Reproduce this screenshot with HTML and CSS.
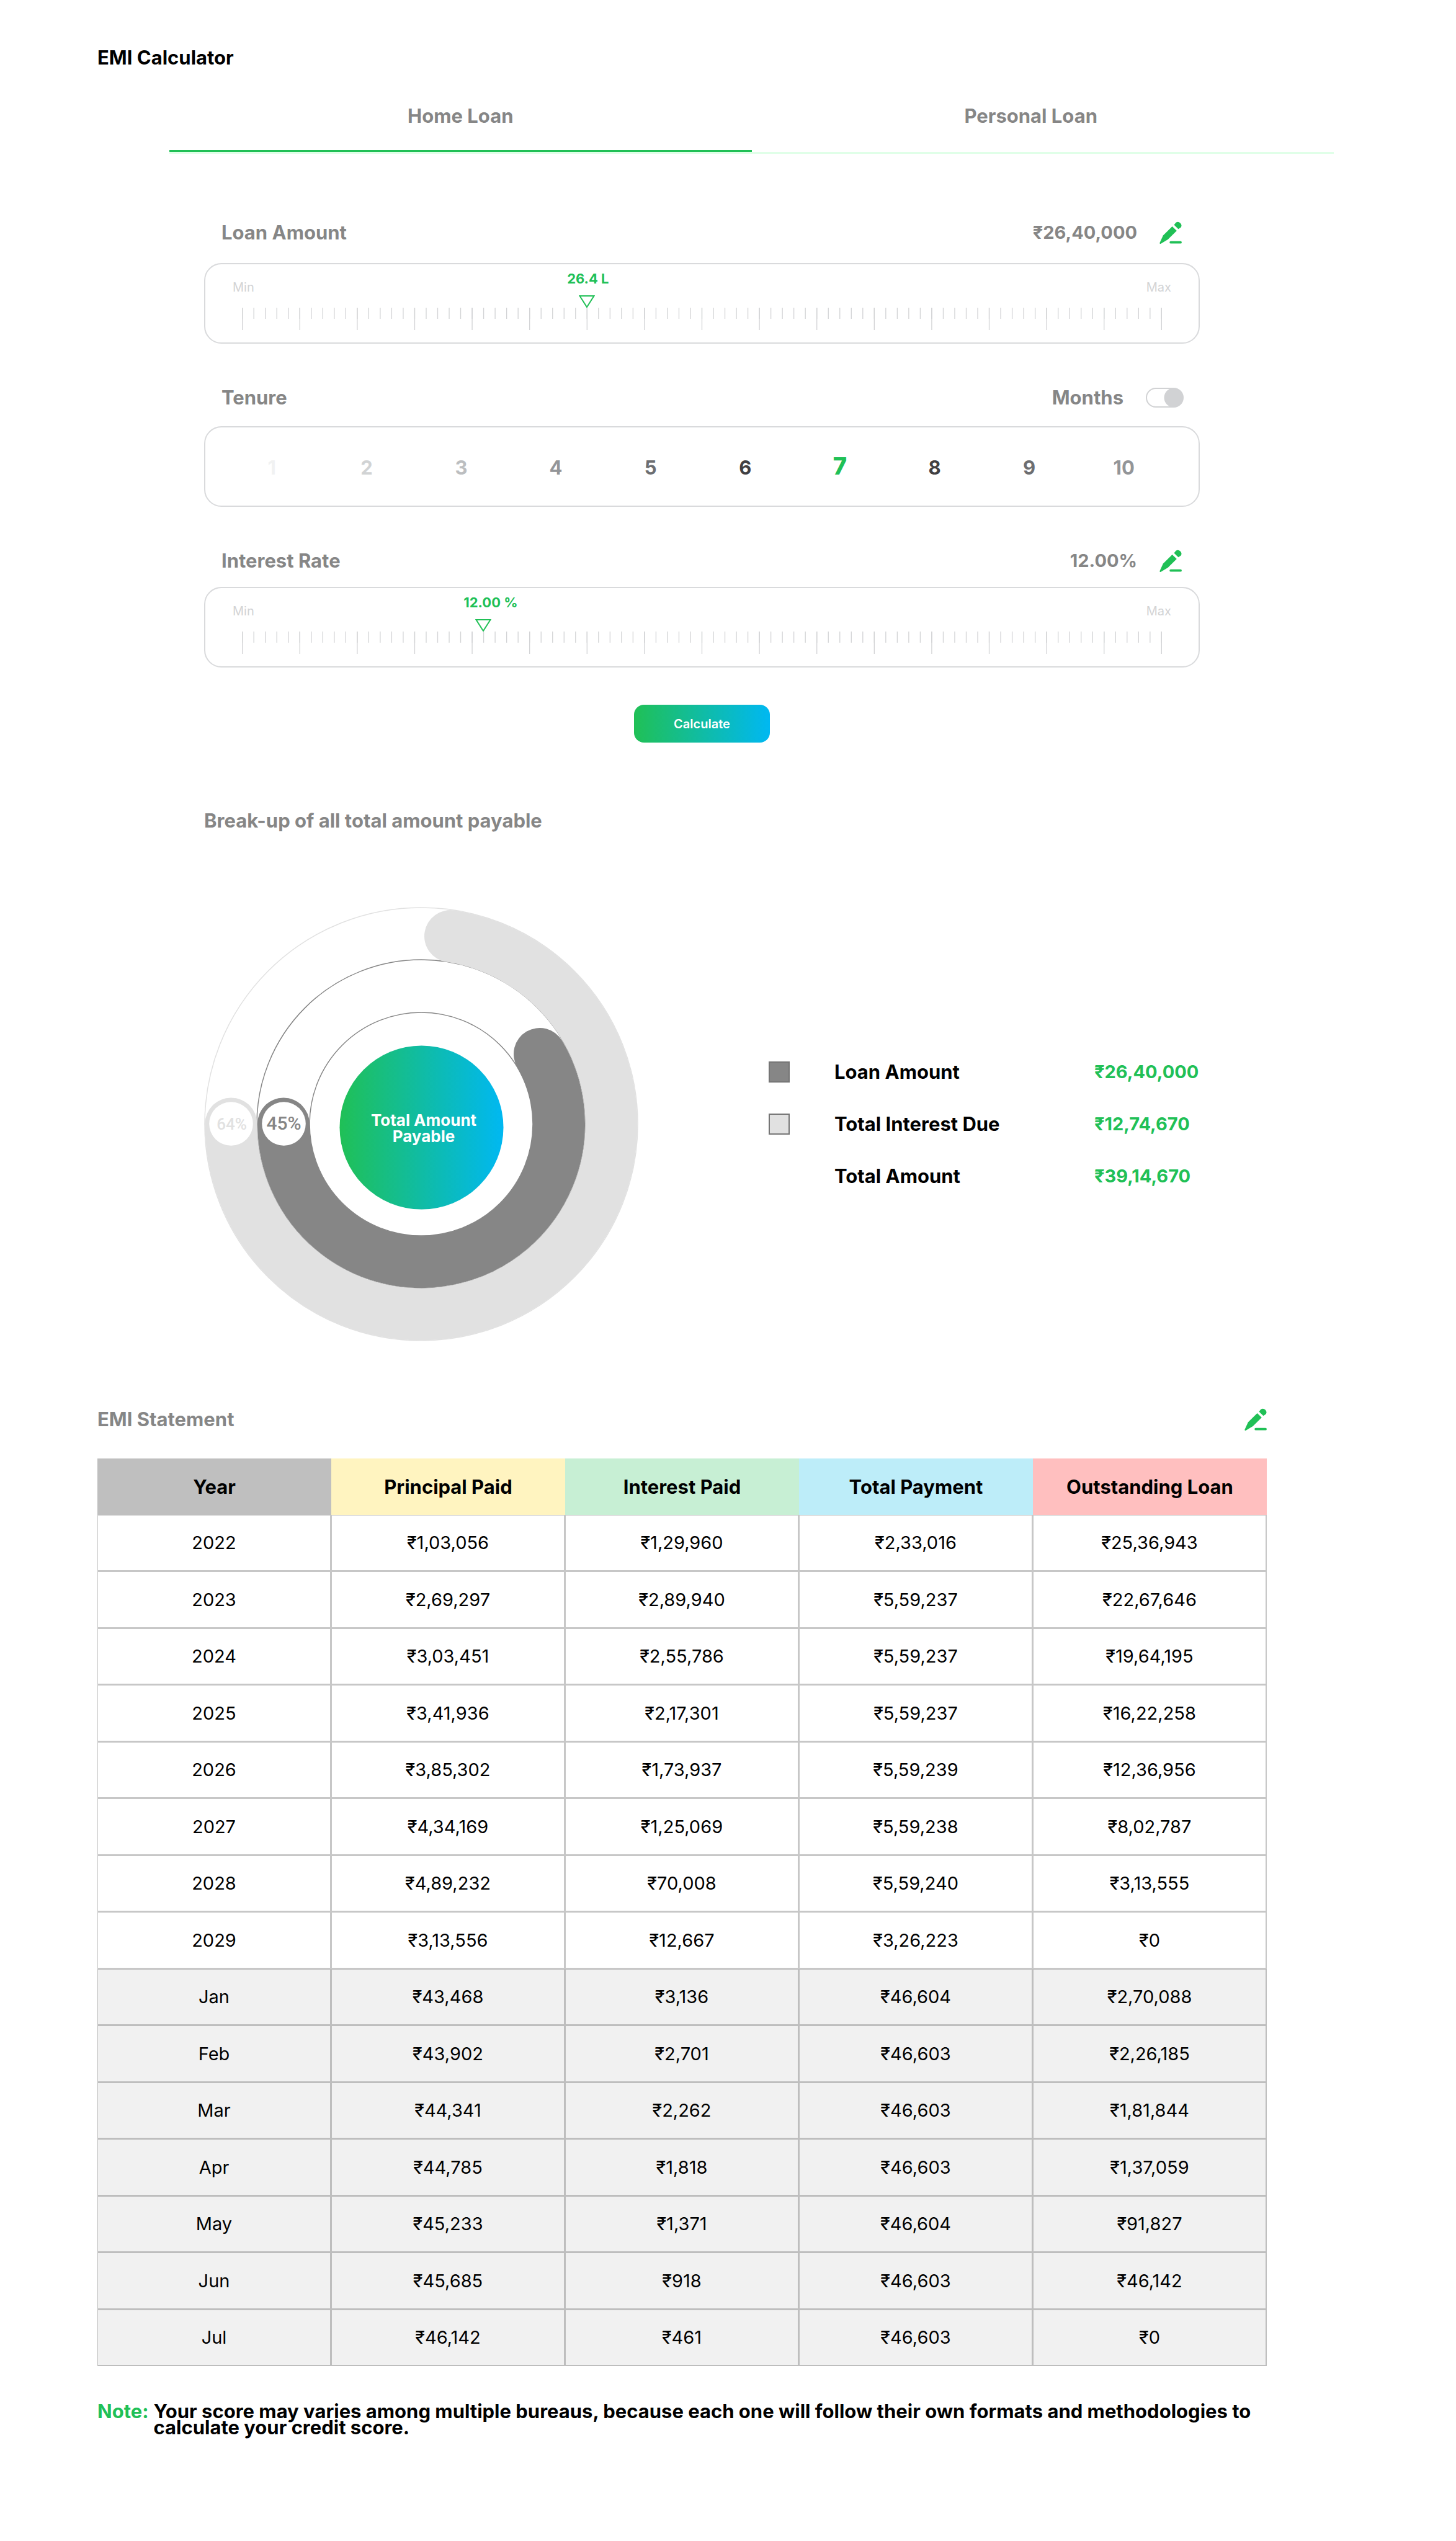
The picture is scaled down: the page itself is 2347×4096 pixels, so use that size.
FILE: index.html
```html
<!DOCTYPE html>
<html lang="en">
<head>
<meta charset="utf-8">
<meta name="viewport" content="width=device-width, initial-scale=1">
<title>EMI Calculator</title>
<link rel="stylesheet" href="styles.css">
</head>
<body>
<svg class="defs" width="0" height="0" aria-hidden="true">
  <symbol id="pencil" viewBox="0 0 36 36">
    <path d="M23.500 5.600 26.500 1.800A5.800 5.800 0 0 1 34.600 9.600L30.400 12.300z"/>
    <path d="M20.600 8 27.800 15 13.600 29.100 2 35.900Q.2 36.300.4 34.400L5.900 22.500z"/>
    <rect x="16.300" y="31.800" width="19.600" height="3.800" rx="1.900"/>
  </symbol>
</svg>
<main>
  <h1 class="title">EMI Calculator</h1>

  <div class="tabs" role="tablist">
    <button class="tab tab--active" type="button" role="tab" aria-selected="true">Home Loan</button>
    <button class="tab" type="button" role="tab" aria-selected="false">Personal Loan</button>
  </div>

  <form class="calculator">
    <section class="field field--amount">
      <div class="field-head">
        <label for="amount">Loan Amount</label>
        <output class="field-value" for="amount">₹26,40,000</output>
        <button class="edit" type="button" aria-label="Edit loan amount"><svg><use href="#pencil"/></svg></button>
      </div>
      <div class="card ruler">
        <div class="limits"><span>Min</span><span>Max</span></div>
        <div class="scale">
          <svg class="ticks" aria-hidden="true">
            <line x1="0" x2="100%" y1="9" y2="9" pathLength="80.07" stroke-width="18" stroke-dasharray=".07 .93"/>
            <line x1="0" x2="100%" y1="18" y2="18" pathLength="16.014" stroke-width="36" stroke-dasharray=".014 .986"/>
          </svg>
          <input class="range" id="amount" type="range" min="0" max="80" value="30">
          <output class="mark" for="amount" style="--at: 37.5%">26.4 L</output>
        </div>
      </div>
    </section>

    <section class="field field--tenure">
      <div class="field-head">
        <span id="tenure-label">Tenure</span>
        <label class="field-unit" for="months">Months</label>
        <input class="toggle" id="months" type="checkbox" checked>
      </div>
      <div class="card years" role="radiogroup" aria-labelledby="tenure-label">
        <label class="year year--f1"><input type="radio" name="tenure">1</label>
        <label class="year year--f2"><input type="radio" name="tenure">2</label>
        <label class="year year--f3"><input type="radio" name="tenure">3</label>
        <label class="year year--f4"><input type="radio" name="tenure">4</label>
        <label class="year year--f5"><input type="radio" name="tenure">5</label>
        <label class="year year--f6"><input type="radio" name="tenure">6</label>
        <label class="year year--on"><input type="radio" name="tenure" checked>7</label>
        <label class="year year--f6"><input type="radio" name="tenure">8</label>
        <label class="year year--f5"><input type="radio" name="tenure">9</label>
        <label class="year year--f4"><input type="radio" name="tenure">10</label>
      </div>
    </section>

    <section class="field field--rate">
      <div class="field-head">
        <label for="rate">Interest Rate</label>
        <output class="field-value" for="rate">12.00%</output>
        <button class="edit" type="button" aria-label="Edit interest rate"><svg><use href="#pencil"/></svg></button>
      </div>
      <div class="card ruler">
        <div class="limits"><span>Min</span><span>Max</span></div>
        <div class="scale">
          <svg class="ticks" aria-hidden="true">
            <line x1="0" x2="100%" y1="9" y2="9" pathLength="80.07" stroke-width="18" stroke-dasharray=".07 .93"/>
            <line x1="0" x2="100%" y1="18" y2="18" pathLength="16.014" stroke-width="36" stroke-dasharray=".014 .986"/>
          </svg>
          <input class="range" id="rate" type="range" min="0" max="80" value="21">
          <output class="mark" for="rate" style="--at: 26.25%">12.00 %</output>
        </div>
      </div>
    </section>

    <button class="calculate" type="button">Calculate</button>
  </form>

  <section class="breakup">
    <h2 class="subtitle">Break-up of all total amount payable</h2>
    <div class="breakup-body">
      <svg class="chart" viewBox="0 0 700 700" role="img" aria-label="Total interest 64%, loan amount 45%">
        <defs>
          <linearGradient id="brand"><stop offset="0" stop-color="#20c056"/><stop offset="1" stop-color="#00b8f2"/></linearGradient>
        </defs>
        <circle class="rim rim--light" cx="350" cy="350" r="349"/>
        <circle class="rim" cx="350" cy="350" r="265"/>
        <circle class="rim" cx="350" cy="350" r="180"/>
        <path class="arc arc--light" d="M43.500 349.500A306.500 306.500 0 1 0 397 47.100"/>
        <path class="arc arc--dark" d="M128 349.500A222 222 0 1 0 541 237"/>
        <circle class="badge" cx="43.500" cy="349.500" r="35.300"/>
        <circle class="badge" cx="128.500" cy="349.500" r="35.300"/>
        <text class="badge-text badge-text--light" x="44.500" y="359">64%</text>
        <text class="badge-text" x="128.500" y="359">45%</text>
        <circle cx="350.500" cy="355.500" r="132" fill="url(#brand)"/>
        <text class="core-text" x="354" y="353">Total Amount</text>
        <text class="core-text" x="354" y="379">Payable</text>
      </svg>
      <ul class="legend">
        <li><i class="swatch swatch--dark"></i><span>Loan Amount</span><b>₹26,40,000</b></li>
        <li><i class="swatch swatch--light"></i><span>Total Interest Due</span><b>₹12,74,670</b></li>
        <li><i></i><span>Total Amount</span><b>₹39,14,670</b></li>
      </ul>
    </div>
  </section>

  <section class="statement">
    <div class="statement-head">
      <h2 class="subtitle">EMI Statement</h2>
      <button class="edit" type="button" aria-label="Edit statement"><svg><use href="#pencil"/></svg></button>
    </div>
    <table class="table">
      <thead>
        <tr><th class="c-year">Year</th><th class="c-principal">Principal Paid</th><th class="c-interest">Interest Paid</th><th class="c-total">Total Payment</th><th class="c-out">Outstanding Loan</th></tr>
      </thead>
      <tbody>
        <tr><td>2022</td><td>₹1,03,056</td><td>₹1,29,960</td><td>₹2,33,016</td><td>₹25,36,943</td></tr>
        <tr><td>2023</td><td>₹2,69,297</td><td>₹2,89,940</td><td>₹5,59,237</td><td>₹22,67,646</td></tr>
        <tr><td>2024</td><td>₹3,03,451</td><td>₹2,55,786</td><td>₹5,59,237</td><td>₹19,64,195</td></tr>
        <tr><td>2025</td><td>₹3,41,936</td><td>₹2,17,301</td><td>₹5,59,237</td><td>₹16,22,258</td></tr>
        <tr><td>2026</td><td>₹3,85,302</td><td>₹1,73,937</td><td>₹5,59,239</td><td>₹12,36,956</td></tr>
        <tr><td>2027</td><td>₹4,34,169</td><td>₹1,25,069</td><td>₹5,59,238</td><td>₹8,02,787</td></tr>
        <tr><td>2028</td><td>₹4,89,232</td><td>₹70,008</td><td>₹5,59,240</td><td>₹3,13,555</td></tr>
        <tr><td>2029</td><td>₹3,13,556</td><td>₹12,667</td><td>₹3,26,223</td><td>₹0</td></tr>
        <tr class="month"><td>Jan</td><td>₹43,468</td><td>₹3,136</td><td>₹46,604</td><td>₹2,70,088</td></tr>
        <tr class="month"><td>Feb</td><td>₹43,902</td><td>₹2,701</td><td>₹46,603</td><td>₹2,26,185</td></tr>
        <tr class="month"><td>Mar</td><td>₹44,341</td><td>₹2,262</td><td>₹46,603</td><td>₹1,81,844</td></tr>
        <tr class="month"><td>Apr</td><td>₹44,785</td><td>₹1,818</td><td>₹46,603</td><td>₹1,37,059</td></tr>
        <tr class="month"><td>May</td><td>₹45,233</td><td>₹1,371</td><td>₹46,604</td><td>₹91,827</td></tr>
        <tr class="month"><td>Jun</td><td>₹45,685</td><td>₹918</td><td>₹46,603</td><td>₹46,142</td></tr>
        <tr class="month"><td>Jul</td><td>₹46,142</td><td>₹461</td><td>₹46,603</td><td>₹0</td></tr>
      </tbody>
    </table>
    <p class="note"><strong>Note:</strong><span>Your score may varies among multiple bureaus, because each one will follow their own formats and methodologies to calculate your credit score.</span></p>
  </section>
</main>
</body>
</html>
```
FILE: styles.css
```css
:root {
  --green: #20c056;
  --blue: #00b8f2;
  --grey: #868686;
  --line: #d2d3d5;
}

* { box-sizing: border-box; }

body {
  margin: 0;
  background: #fff;
  color: #000;
  font-family: Inter, "Noto Sans", sans-serif;
  font-size: 31px;
  font-weight: 700;
  line-height: 40px;
}

button { font: inherit; padding: 0; border: 0; background: none; cursor: pointer; }
h1, h2, p, ul { margin: 0; padding: 0; }

main { padding: 73px 0 100px; }
.defs { position: absolute; }

.title { margin-left: 157px; font-size: 31px; }

/* Tabs */
.tabs {
  display: flex;
  margin: 34px 197px 0 273px;
  border-bottom: 3px solid #e0ffe8;
}
.tab {
  flex: none;
  width: 50%;
  padding: 20px 0 35px;
  border-bottom: 3px solid transparent;
  color: var(--grey);
}
.tab:last-child { padding-right: 38px; }
.tab--active { border-color: var(--green); }

/* Calculator form */
.calculator {
  display: flex;
  flex-direction: column;
  margin: 105px 413px 0 329px;
}
.field { margin-bottom: 65px; }
.field:last-of-type { margin-bottom: 60px; }
.field-head {
  display: flex;
  align-items: center;
  height: 44px;
  margin-bottom: 27px;
  padding: 0 29px 0 28px;
  color: var(--grey);
}
.field--tenure .field-head { margin-bottom: 24px; padding-right: 26px; }
.field--rate .field-head { margin-bottom: 20px; }
.field-value, .field-unit { margin-left: auto; margin-right: 36px; }
.field-value { font-size: 29px; }
.edit { width: 36px; height: 36px; }
.edit svg { display: block; width: 36px; height: 36px; fill: var(--green); overflow: visible; }

.card {
  border: 2px solid #d9dadc;
  border-radius: 28px;
}

/* Ruler slider */
.ruler { padding: 26px 44px 20px; }
.limits {
  display: flex;
  justify-content: space-between;
  color: var(--line);
  font-size: 20px;
  font-weight: 400;
  line-height: 22px;
}
.scale {
  display: grid;
  position: relative;
  margin: 2px 15px 0;
}
.ticks {
  grid-area: 1 / 1;
  width: 100%;
  height: 36px;
  margin-top: 20px;
  stroke: var(--line);
}
.range {
  grid-area: 1 / 1;
  appearance: none;
  width: calc(100% + 26px);
  height: 20px;
  margin: 0 -13px;
  background: none;
}
.range::-webkit-slider-thumb {
  appearance: none;
  width: 26px;
  height: 20px;
  background: url("data:image/svg+xml,%3Csvg xmlns='http://www.w3.org/2000/svg' width='26' height='20'%3E%3Cpath d='M1.500 1h23L13 19z' fill='%23fff' stroke='%2320c056' stroke-width='2'/%3E%3C/svg%3E");
}
.mark {
  position: absolute;
  top: -40px;
  left: calc(var(--at) - 32px);
  color: var(--green);
  font-size: 22px;
  line-height: 26px;
  white-space: nowrap;
}

/* Tenure */
.toggle {
  appearance: none;
  width: 61px;
  height: 32px;
  margin: 0;
  border: 2px solid #d1d2d4;
  border-radius: 16px;
}
.toggle:checked {
  background: radial-gradient(circle at calc(100% - 16px) 50%, #d1d2d4 15px, transparent 16px) border-box;
}
.years {
  display: grid;
  grid-template-columns: repeat(10, 1fr);
  align-items: baseline;
  height: 130px;
  padding: 42px 44px 0 31px;
}
.year { text-align: center; }
.year input { position: absolute; opacity: 0; pointer-events: none; }
.year--f1 { color: #f1f2f2; }
.year--f2 { color: #d1d3d4; }
.year--f3 { color: #bcbec0; }
.year--f4 { color: #939598; }
.year--f5 { color: #6d6e71; }
.year--f6 { color: #414042; }
.year--on { color: var(--green); font-size: 38px; font-weight: 800; }

.calculate {
  align-self: center;
  width: 219px;
  height: 61px;
  border-radius: 16px;
  background: linear-gradient(90deg, var(--green), var(--blue));
  color: #fff;
  font-size: 20px;
  font-weight: 600;
}

/* Break-up */
.breakup { margin: 106px 413px 0 329px; }
.subtitle { color: var(--grey); font-size: 31px; }
.breakup-body {
  display: flex;
  align-items: center;
  gap: 210px;
  margin-top: 119px;
}
.chart { flex: none; width: 700px; height: 700px; }
.rim { fill: none; stroke: var(--grey); stroke-width: 1.5; }
.rim--light { stroke: #e1e1e1; }
.arc { fill: none; stroke-width: 84; stroke-linecap: round; }
.arc--light { stroke: #e1e1e1; }
.arc--dark { stroke: var(--grey); }
.badge { fill: #fff; }
.badge-text {
  fill: var(--grey);
  font-family: Roboto, sans-serif;
  font-size: 30px;
  font-weight: 500;
  text-anchor: middle;
}
.badge-text--light { fill: #e1e1e1; font-size: 26px; }
.core-text { fill: #fff; font-size: 26px; text-anchor: middle; }

.legend { flex: 1; list-style: none; }
.legend li {
  display: grid;
  grid-template-columns: 34px 1fr 170px;
  align-items: center;
  height: 84px;
}
.legend span { padding-left: 72px; }
.legend b { color: var(--green); font-size: 29px; font-weight: 700; }
.swatch { height: 34px; border: 2px solid #757575; }
.swatch--dark { background: var(--grey); }
.swatch--light { background: #e1e1e1; }

/* Statement */
.statement { margin: 104px 305px 0 157px; }
.statement-head {
  display: flex;
  align-items: center;
  justify-content: space-between;
  height: 44px;
  margin-bottom: 41px;
}
.table {
  width: 100%;
  table-layout: fixed;
  border-collapse: separate;
  border-spacing: 0;
  text-align: center;
}
.table th, .table td { height: 91px; padding: 0; }
.table th { font-weight: 700; }
.table td {
  border: solid #c7c7c7;
  border-width: 1px 2px 2px 1px;
  font-size: 29px;
  font-weight: 400;
}
.table tbody tr:nth-child(even) td { height: 92px; }
.table .month td { border-color: #bebebe; background: #f1f1f1; }
.c-year { background: #bfbfbf; }
.c-principal { background: #fff4c0; }
.c-interest { background: #c7efd4; }
.c-total { background: #bdedf9; }
.c-out { background: #ffbfbf; }

.note {
  display: flex;
  gap: 8px;
  margin-top: 60px;
  line-height: 26px;
}
.note strong { color: var(--green); font-weight: 700; }
```
